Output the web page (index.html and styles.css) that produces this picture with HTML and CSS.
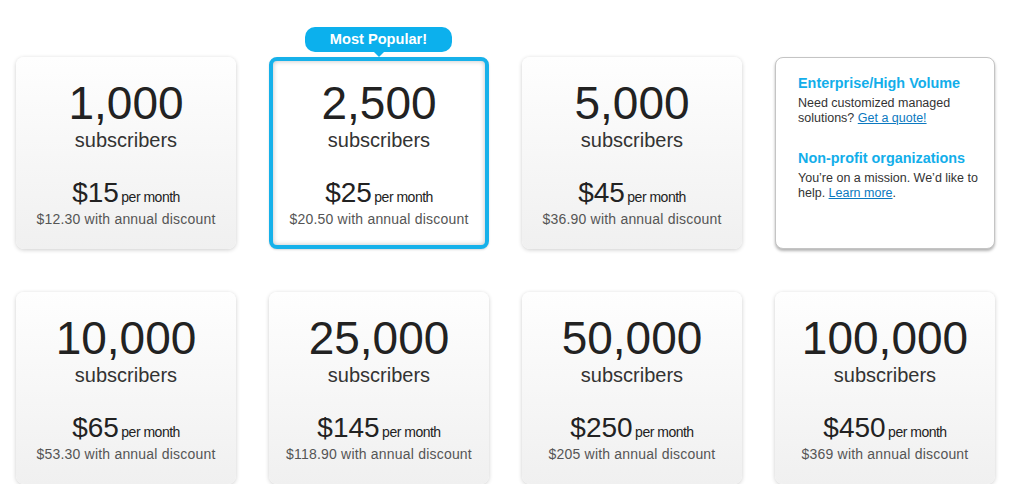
FILE: index.html
```html
<!DOCTYPE html>
<html lang="en">
<head>
    <title>Pricing</title>
    <meta http-equiv="content-type" content="text/html;charset=UTF-8" />
    <link rel="stylesheet" href="styles.css">
</head>
    <body>
        <div class="plans">
            <div class="plan">
                <div class="plan-count">1,000</div>
                <div class="plan-unit">subscribers</div>
                <div class="plan-price"><span class="plan-amount">$15</span> <span class="plan-period">per month</span></div>
                <div class="plan-discount">$12.30 with annual discount</div>
            </div>
            <div class="plan plan-popular">
                <div class="popular-badge">Most Popular!</div>
                <div class="plan-count">2,500</div>
                <div class="plan-unit">subscribers</div>
                <div class="plan-price"><span class="plan-amount">$25</span> <span class="plan-period">per month</span></div>
                <div class="plan-discount">$20.50 with annual discount</div>
            </div>
            <div class="plan">
                <div class="plan-count">5,000</div>
                <div class="plan-unit">subscribers</div>
                <div class="plan-price"><span class="plan-amount">$45</span> <span class="plan-period">per month</span></div>
                <div class="plan-discount">$36.90 with annual discount</div>
            </div>
            <div class="plan-info">
                <h2>Enterprise/High Volume</h2>
                <p>Need customized managed solutions? <a href="#">Get a quote!</a></p>
                <h2>Non-profit organizations</h2>
                <p>You&rsquo;re on a mission. We&rsquo;d like to help. <a href="#">Learn more</a>.</p>
            </div>

            <div class="plan">
                <div class="plan-count">10,000</div>
                <div class="plan-unit">subscribers</div>
                <div class="plan-price"><span class="plan-amount">$65</span> <span class="plan-period">per month</span></div>
                <div class="plan-discount">$53.30 with annual discount</div>
            </div>
            <div class="plan">
                <div class="plan-count">25,000</div>
                <div class="plan-unit">subscribers</div>
                <div class="plan-price"><span class="plan-amount">$145</span> <span class="plan-period">per month</span></div>
                <div class="plan-discount">$118.90 with annual discount</div>
            </div>
            <div class="plan">
                <div class="plan-count">50,000</div>
                <div class="plan-unit">subscribers</div>
                <div class="plan-price"><span class="plan-amount">$250</span> <span class="plan-period">per month</span></div>
                <div class="plan-discount">$205 with annual discount</div>
            </div>
            <div class="plan">
                <div class="plan-count">100,000</div>
                <div class="plan-unit">subscribers</div>
                <div class="plan-price"><span class="plan-amount">$450</span> <span class="plan-period">per month</span></div>
                <div class="plan-discount">$369 with annual discount</div>
            </div>
        </div>
    </body>
</html>
```

FILE: styles.css
```css
body {
    margin: 0;
    background: #fff;
    font-family: "Liberation Sans", Arial, sans-serif;
    color: #222;
}

.plans {
    display: grid;
    grid-template-columns: repeat(4, 220px);
    grid-auto-rows: 192px;
    column-gap: 33px;
    row-gap: 43px;
    padding: 57px 0 0 16px;
}

.plan {
    position: relative;
    box-sizing: border-box;
    padding-top: 23px;
    text-align: center;
    border-radius: 8px;
    background: linear-gradient(#fefefe, #f0f0f0);
    box-shadow: 0 1px 4px rgba(0, 0, 0, 0.2);
}

.plan-popular {
    padding-top: 19px;
    border: 4px solid #16b1ea;
    background: #fff;
    box-shadow: inset 0 0 5px rgba(0, 0, 0, 0.25), 0 1px 2px rgba(0, 0, 0, 0.15);
}

.plan-count {
    font-size: 46px;
    line-height: 46px;
    color: #222;
}

.plan-unit {
    margin-top: 2px;
    font-size: 20px;
    line-height: 24px;
    color: #333;
}

.plan-price {
    margin-top: 25px;
    line-height: 32px;
    color: #222;
}

.plan-amount {
    font-size: 28px;
}

.plan-period {
    margin-left: -2px;
    font-size: 14px;
    letter-spacing: -0.5px;
}

.plan-discount {
    margin-top: -3px;
    font-size: 14px;
    line-height: 18px;
    letter-spacing: 0.2px;
    color: #555;
}

.popular-badge {
    position: absolute;
    top: -34px;
    left: 50%;
    width: 147px;
    height: 25px;
    margin-left: -74px;
    border-radius: 10px;
    background: #0cb0ed;
    color: #fff;
    font-size: 14.6px;
    font-weight: bold;
    line-height: 25px;
}

.popular-badge::after {
    content: "";
    position: absolute;
    left: 50%;
    bottom: -5px;
    margin-left: -5px;
    border-left: 5px solid transparent;
    border-right: 5px solid transparent;
    border-top: 5px solid #0cb0ed;
}

.plan-info {
    box-sizing: border-box;
    padding: 16px 8px 0 22px;
    border: 1px solid #c4c4c4;
    border-radius: 8px;
    background: #fff;
    box-shadow: 0 2px 3px rgba(0, 0, 0, 0.3);
}

.plan-info h2 {
    margin: 0;
    font-size: 14.4px;
    line-height: 18px;
    color: #13aeea;
}

.plan-info p {
    margin: 4px 0 23px 0;
    font-size: 12.5px;
    line-height: 15px;
    color: #333;
}

.plan-info a {
    color: #0b79c0;
}
```
